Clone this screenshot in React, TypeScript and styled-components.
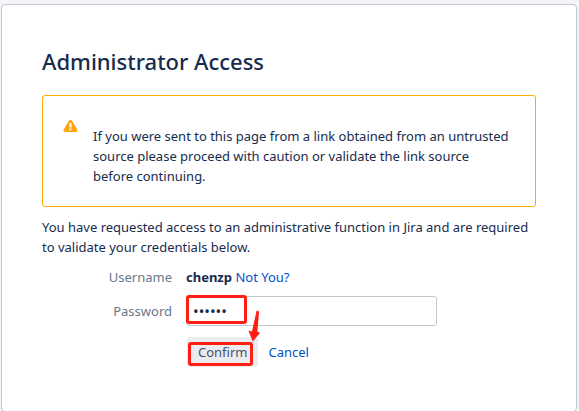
import React from 'react';
import styled, { createGlobalStyle } from 'styled-components';

const GlobalStyle = createGlobalStyle`
  * { box-sizing: border-box; }
  body {
    margin: 0;
    background: #f4f5f7;
    color: #172b4d;
    font-family: 'Noto Sans', 'Open Sans', sans-serif;
    font-size: 13px;
    line-height: 20px;
    overflow: hidden;
  }
`;

const Card = styled.main`
  margin: 4px 2px 0 1px;
  padding: 40px 40px 44px;
  background: #fff;
  border: 1px solid #c1c7d0;
  border-radius: 4px;
`;

const Title = styled.h1`
  margin: 0 0 18px;
  font-size: 22px;
  line-height: 32px;
  font-weight: 500;
`;

const Warning = styled.section`
  display: flex;
  gap: 15px;
  padding: 20px 25px 20px 20px;
  border: 1px solid #ffab00;
  border-radius: 3px;
`;

const WarningIcon = styled.svg`
  flex: none;
  width: 15px;
  height: 20px;
`;

const WarningText = styled.p`
  margin: 10px 0 0;
`;

const Intro = styled.p`
  margin: 10px 0;
`;

const Form = styled.form`
  display: grid;
  grid-template-columns: 130px minmax(0, 1fr);
  column-gap: 14px;
  align-items: center;
`;

const Label = styled.label`
  color: #6b778c;
  text-align: right;
`;

const User = styled.output`
  strong { font-weight: 700; }
`;

const Link = styled.a`
  color: #0052cc;
  text-decoration: none;
`;

const Field = styled.div`
  position: relative;
  max-width: 251px;
  margin: 9px 0;
`;

const PasswordInput = styled.input`
  display: block;
  width: 100%;
  height: 30px;
  padding: 0 6px;
  border: 1px solid #c1c7d0;
  border-radius: 3px;
  background: #fff;
  color: #172b4d;
  font: 15px/20px 'Noto Sans', sans-serif;
  outline: none;
`;

const Actions = styled.div`
  position: relative;
  grid-column: 2;
  display: flex;
  align-items: center;
  gap: 10px;
  margin-top: 2px;
  padding-left: 1px;
`;

const ConfirmButton = styled.button`
  height: 30px;
  padding: 0 11px;
  border: 0;
  border-radius: 3px;
  background: #ebecf0;
  color: #42526e;
  font: inherit;
`;

const Highlight = styled.span<{ $x: number; $y: number; $w: number; $h: number }>`
  position: absolute;
  left: ${p => p.$x}px;
  top: ${p => p.$y}px;
  width: ${p => p.$w}px;
  height: ${p => p.$h}px;
  border: 3px solid #ff1e12;
  border-radius: 3px;
  pointer-events: none;
`;

const Arrow = styled.svg`
  position: absolute;
  left: 60px;
  top: -27px;
  width: 16px;
  height: 32px;
  pointer-events: none;
`;

export default function App() {
  return (
    <>
      <GlobalStyle />
      <Card>
        <Title>Administrator Access</Title>
        <Warning>
          <WarningIcon viewBox="0 0 15 20" aria-hidden="true">
            <path
              fillRule="evenodd"
              fill="#ffa50f"
              d="M5.6 5.2Q7.5 2.8 9.4 5.2L14.3 13.4Q15.2 16 13 16H2Q-.2 16 .7 13.4ZM6.5 7V11.4H8.5V7ZM6.5 12.4V14.2H8.5V12.4Z"
            />
          </WarningIcon>
          <WarningText>
            If you were sent to this page from a link obtained from an untrusted source please
            proceed with caution or validate the link source before continuing.
          </WarningText>
        </Warning>
        <Intro>
          You have requested access to an administrative function in Jira and are required to
          validate your credentials below.
        </Intro>
        <Form onSubmit={e => e.preventDefault()}>
          <Label htmlFor="username">Username</Label>
          <User id="username">
            <strong>chenzp</strong> <Link href="#login">Not You?</Link>
          </User>
          <Label htmlFor="password">Password</Label>
          <Field>
            <PasswordInput id="password" type="password" defaultValue="secret" />
            <Highlight $x={0} $y={-1} $w={61} $h={29} />
          </Field>
          <Actions>
            <ConfirmButton type="submit">Confirm</ConfirmButton>
            <Link href="#cancel">Cancel</Link>
            <Highlight $x={2} $y={5} $w={65} $h={24} />
            <Arrow viewBox="0 0 16 32" aria-hidden="true">
              <path fill="#ff1e12" d="M10.5 1Q12.5 0 13 2L11.4 21.5L14 23L6.8 31.5L2.4 20.5L6 21.5Z" />
            </Arrow>
          </Actions>
        </Form>
      </Card>
    </>
  );
}
